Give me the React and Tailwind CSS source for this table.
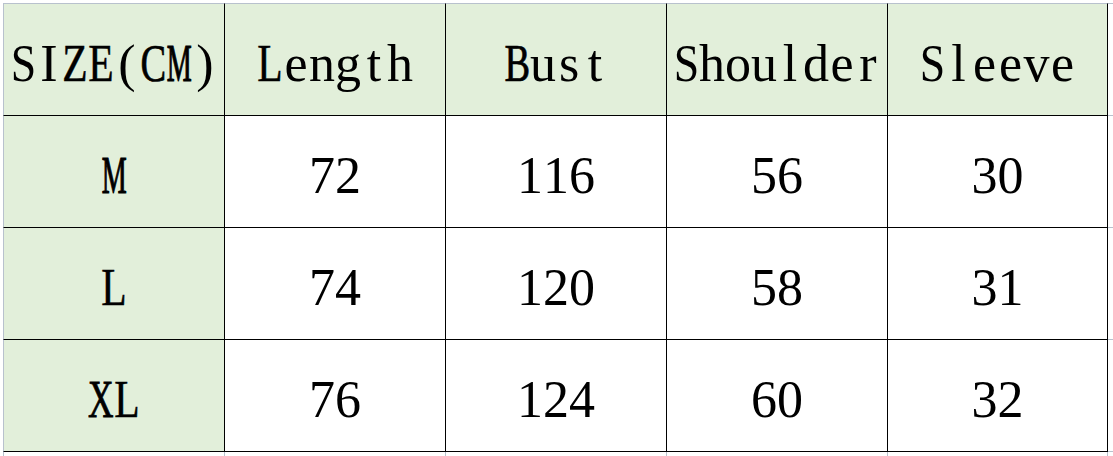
import React from 'react';

// glyphs wider than a half-width cell get squeezed so the text reads monospaced
const fit = {
  S: 'scale-x-[0.88]',
  Z: 'scale-x-[0.8] [-webkit-text-stroke:0.5px_black]',
  E: 'scale-x-[0.8] [-webkit-text-stroke:0.5px_black]',
  C: 'scale-x-[0.74] [-webkit-text-stroke:0.7px_black]',
  M: 'scale-x-[0.54] [-webkit-text-stroke:1.2px_black]',
  L: 'scale-x-[0.8] [-webkit-text-stroke:0.5px_black]',
  B: 'scale-x-[0.74] [-webkit-text-stroke:0.7px_black]',
  X: 'scale-x-[0.68] [-webkit-text-stroke:0.9px_black]',
};

const Mono = ({ text }) => (
  <span className="inline-flex">
    {text.split('').map((ch, i) => (
      <span key={i} className="inline-flex w-[26px] justify-center">
        <span className={`inline-block ${fit[ch] || ''}`}>{ch}</span>
      </span>
    ))}
  </span>
);

const widths = ['w-[222px] border-l border-l-[#b8c1cd]', 'w-[221px]', 'w-[221px]', 'w-[221px]', 'w-[220px]'];

const header = ['SIZE(CM)', 'Length', 'Bust', 'Shoulder', 'Sleeve'];
const rows = [
  ['M', '72', '116', '56', '30'],
  ['L', '74', '120', '58', '31'],
  ['XL', '76', '124', '60', '32'],
];

const Cell = ({ col, green, top, children }) => (
  <div
    className={`${widths[col]} ${green ? 'bg-[#e2efda]' : 'bg-white'} ${
      top ? 'h-[113px] border-t border-t-[#b8c1cd]' : 'h-[112px]'
    } border-r border-b border-r-black border-b-black flex items-center justify-center pt-[8px] shrink-0`}
  >
    <Mono text={children} />
  </div>
);

const Filler = ({ top }) => (
  <div
    className={`flex-1 border-b border-b-[#b8c1cd] ${
      top ? 'h-[113px] border-t border-t-[#b8c1cd]' : 'h-[112px]'
    }`}
  />
);

const App = () => {
  return (
    <div className="w-[1113px] h-[456px] bg-white overflow-hidden text-black text-[52px] leading-none font-['Liberation_Serif','Times_New_Roman',serif]">
      <div className="pl-[3px] pt-[3px]">
        <div className="flex">
          {header.map((h, i) => (
            <Cell key={h} col={i} green top>
              {h}
            </Cell>
          ))}
          <Filler top />
        </div>
        {rows.map((r) => (
          <div key={r[0]} className="flex">
            {r.map((v, i) => (
              <Cell key={i} col={i} green={i === 0}>
                {v}
              </Cell>
            ))}
            <Filler />
          </div>
        ))}
        <div className="flex h-[8px]">
          {widths.map((w, i) => (
            <div key={i} className={`${w} border-r border-r-[#b8c1cd] shrink-0`} />
          ))}
        </div>
      </div>
    </div>
  );
};

export default App;
